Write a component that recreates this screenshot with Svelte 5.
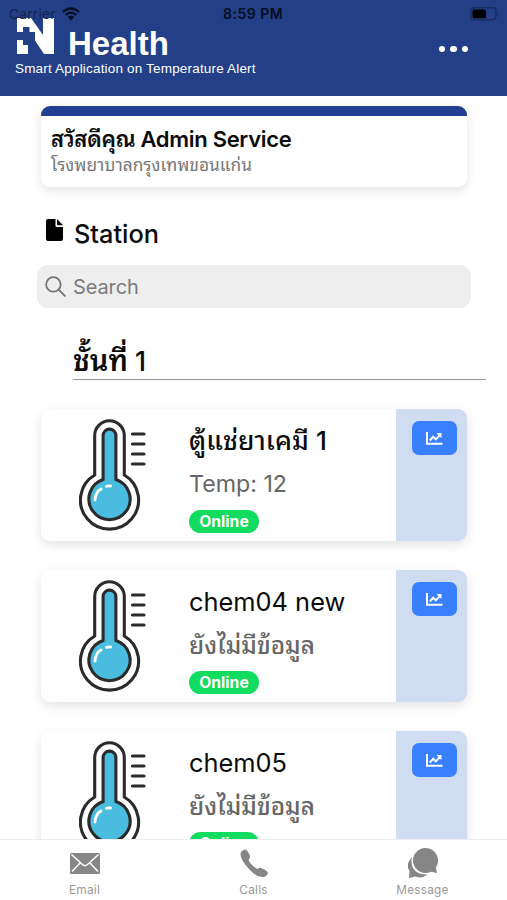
<script>
  const stations = [
    { name: 'ตู้แช่ยาเคมี 1', thai: true, detail: 'Temp: 12', status: 'Online' },
    { name: 'chem04 new', detail: 'ยังไม่มีข้อมูล', thaiDetail: true, status: 'Online' },
    { name: 'chem05', detail: 'ยังไม่มีข้อมูล', thaiDetail: true, status: 'Online' }
  ];

  let search = $state('');
</script>

<div class="app">
  <header class="header">
    <div class="statusbar">
      <span class="carrier">Carrier</span>
      <svg class="wifi" viewBox="0 0 18 14">
        <path d="M1 5Q9-2 17 5M3.8 8Q9 3.4 14.2 8" fill="none" stroke="#050d20" stroke-width="2.2" />
        <path d="M5.8 10Q9 7.4 12.2 10L9 13.6z" fill="#050d20" />
      </svg>
      <span class="time">8:59 PM</span>
      <svg class="battery" viewBox="0 0 30 14">
        <rect x=".8" y=".8" width="25" height="12" rx="3" fill="none" stroke="#182d61" stroke-width="1.4" />
        <rect x="2.5" y="2.5" width="13.5" height="8.8" rx="1.5" fill="#000" />
        <path d="M27 4.5Q29.5 6.8 27 9z" fill="#182d61" />
      </svg>
    </div>
    <div class="brand">
      <svg class="logo" viewBox="0 0 38 37">
        <path d="M0 0H14L26 17V0H37V36H27L18 22.5V14H12.5V9H6V14H0z" fill="#fff" />
        <path d="M0 22H6V27H11V36H0z" fill="#fff" />
      </svg>
      <h1>Health</h1>
      <button class="more" aria-label="Menu"><i></i><i></i><i></i></button>
    </div>
    <p class="tagline">Smart Application on Temperature Alert</p>
  </header>

  <main class="content">
    <section class="greeting">
      <h2>สวัสดีคุณ Admin Service</h2>
      <p>โรงพยาบาลกรุงเทพขอนแก่น</p>
    </section>

    <div class="title">
      <svg class="file" viewBox="0 0 17 22">
        <path d="M2 0H9.5V6.5Q9.5 8 11 8H17V20Q17 22 15 22H2Q0 22 0 20V2Q0 0 2 0z" />
        <path d="M11 0L17 6.3H12Q11 6.3 11 5.3z" />
      </svg>
      <h3>Station</h3>
    </div>

    <label class="search">
      <svg viewBox="0 0 22 22" fill="none" stroke="#747474" stroke-width="1.9" stroke-linecap="round">
        <circle cx="8.8" cy="8.8" r="7.6" />
        <path d="M14.3 14.3L20.8 20.8" />
      </svg>
      <input type="text" placeholder="Search" bind:value={search} />
    </label>

    <h3 class="floor"><span>ชั้นที่</span> 1</h3>

    {#each stations as station}
      <article class="card">
        <svg class="thermo" viewBox="0 0 70 112">
          <path d="M15.7 56V16.5a14.800 14.800 0 0 1 29.600 0V56A29.100 29.100 0 1 1 15.7 56z" fill="#fff" stroke="#2b2b2b" stroke-width="3.1" />
          <path d="M24.1 60.5V16.5a6.400 6.400 0 0 1 12.800 0V60.5A20.600 20.600 0 1 1 24.1 60.5z" fill="#49bce0" stroke="#2b2b2b" stroke-width="3.1" />
          <path d="M16 81Q16.5 73 22 70M27.5 67.3Q29.5 66.7 31.5 67" fill="none" stroke="#fff" stroke-width="2.9" stroke-linecap="round" />
          <path d="M53.5 15H65M53.5 25H65M53.5 35H65M53.5 45H65" stroke="#2b2b2b" stroke-width="3.2" stroke-linecap="round" />
        </svg>
        <div class="info">
          <h4 class:thai={station.thai}>{station.name}</h4>
          <p class:thai={station.thaiDetail}>{station.detail}</p>
          <span class="badge">{station.status}</span>
        </div>
        <div class="side">
          <button class="chart" aria-label="Chart">
            <svg viewBox="0 0 17 13" fill="none" stroke="#fff" stroke-width="2">
              <path d="M1 0V11.8H16.5" />
              <path d="M3.8 8.5L7.2 4.8L9.8 7.4L13.5 3.5" />
              <path d="M10.5 1H15.5V6z" fill="#fff" stroke="none" />
            </svg>
          </button>
        </div>
      </article>
    {/each}
  </main>

  <nav class="tabs">
    <a href="#email">
      <svg viewBox="0 0 30 30" fill="#868686">
        <rect x="0" y="5" width="30" height="21" rx="1.5" />
        <path d="M1.5 6.5L12.5 16.5Q15 18.8 17.5 16.5L28.5 6.5M2 23.5L10 15M28 23.5L20 15" fill="none" stroke="#fff" stroke-width="1.5" />
      </svg>
      <span>Email</span>
    </a>
    <a href="#calls">
      <svg viewBox="0 0 30 30" fill="#868686">
        <path d="M1.5 5Q3.5 1.5 6.5 1.5Q9 2.500 11 8Q11.5 10 9.500 12Q11.5 17 18.500 21Q21 19 22 20Q28.5 22.500 29 25Q28 28.500 24.500 29Q18 30 10 21Q1 11 1.5 5z" />
      </svg>
      <span>Calls</span>
    </a>
    <a href="#message">
      <svg viewBox="0 0 30 30" fill="#868686">
        <path d="M4 9Q-3 16.500 1.5 23L1 30L7.500 28.500Q14 31 19.500 26.500Q9 27 5 20Q2.5 15 4 9z" />
        <path d="M17.500 0a12.500 12.500 0 1 0 5.500 23.700L29 25L27.800 19.500A12.500 12.500 0 0 0 17.500 0z" />
      </svg>
      <span>Message</span>
    </a>
  </nav>
</div>

<style>
  :global(body) {
    margin: 0;
    background: #fff;
  }

  .app {
    display: flex;
    flex-direction: column;
    height: 900px;
    overflow: hidden;
    background: #fff;
    color: #0c0c0c;
    font-family: Inter, 'Noto Sans Thai Looped', 'Noto Sans Thai', sans-serif;
  }

  h1, h2, h3, h4, p {
    margin: 0;
  }

  button {
    border: 0;
    padding: 0;
  }

  .header {
    height: 96px;
    flex: none;
    background: #223f87;
    color: #fff;
    font-family: 'Liberation Sans', sans-serif;
  }

  .statusbar {
    position: relative;
    z-index: 1;
    display: flex;
    align-items: center;
    height: 18px;
    padding: 5px 7px 0 9px;
    color: #050d20;
    font: 13px/18px Inter, sans-serif;
    white-space: nowrap;
  }

  .carrier {
    width: 47px;
    color: #14244c;
    font-size: 13.6px;
    letter-spacing: 0.3px;
  }

  .wifi {
    width: 18px;
    height: 14px;
    margin-left: 6px;
  }

  .time {
    margin-left: 143px;
    font-size: 14px;
    font-weight: 600;
    letter-spacing: 0.5px;
  }

  .battery {
    width: 30px;
    height: 14px;
    margin-left: auto;
  }

  .brand {
    display: flex;
    height: 37px;
    margin-top: -5px;
    padding: 0 39px 0 17px;
  }

  .logo {
    width: 38px;
    height: 37px;
  }

  h1 {
    margin: 6px 0 0 13px;
    font-size: 33px;
    line-height: 40px;
  }

  .more {
    display: flex;
    gap: 5px;
    align-items: flex-start;
    margin-left: auto;
    padding-top: 28px;
    background: none;
  }

  .more i {
    width: 6.4px;
    height: 6.4px;
    border-radius: 50%;
    background: #fff;
  }

  .tagline {
    margin: 6px 0 0 15px;
    font-size: 13.5px;
    line-height: 16px;
    letter-spacing: 0.18px;
  }

  .content {
    flex: 1;
    min-height: 0;
    overflow: hidden;
    padding: 10px 36px 0 41px;
  }

  .greeting {
    box-sizing: border-box;
    height: 81px;
    width: 426px;
    border-top: 10px solid #223f91;
    border-radius: 9px;
    padding: 10px 10px 0;
    box-shadow: 0 4px 11px rgba(0, 0, 0, 0.11);
  }

  h2 {
    font-size: 22px;
    line-height: 26px;
    font-weight: 600;
    letter-spacing: -0.3px;
    white-space: nowrap;
  }

  .greeting p {
    font-size: 17.3px;
    line-height: 24px;
    padding-top: 1px;
    color: #777;
  }

  .title {
    display: flex;
    align-items: flex-start;
    gap: 11px;
    margin-top: 32px;
    padding-left: 5px;
  }

  .file {
    width: 17px;
    height: 22px;
  }

  h3 {
    font-size: 25.3px;
    line-height: 30px;
    font-weight: 500;
  }

  .search {
    display: flex;
    align-items: center;
    gap: 7px;
    box-sizing: border-box;
    width: 434px;
    height: 43px;
    margin: 16px 0 0 -4px;
    padding-left: 8px;
    border-radius: 11px;
    background: #eee;
  }

  .search svg {
    width: 21px;
    height: 21px;
  }

  .search input {
    flex: 1;
    border: 0;
    padding: 0;
    outline: 0;
    background: none;
    font: 20px Inter, sans-serif;
    letter-spacing: -0.1px;
  }

  .search input::placeholder {
    color: #7b7b7b;
  }

  .floor {
    height: 47px;
    margin: 24px -15px 29px 32px;
    border-bottom: 1px solid #999;
    font-size: 26.5px;
    line-height: 57px;
    white-space: nowrap;
  }

  .floor span {
    font-size: 29px;
    font-weight: 600;
  }

  .card {
    display: flex;
    width: 426px;
    height: 132px;
    margin-bottom: 29px;
    border-radius: 9px;
    overflow: hidden;
    box-shadow: 0 4px 11px rgba(0, 0, 0, 0.11);
  }

  .thermo {
    width: 70px;
    height: 112px;
    margin: 10px 0 0 38px;
  }

  .info {
    flex: 1;
    padding: 12px 0 0 40px;
    white-space: nowrap;
  }

  h4 {
    height: 40px;
    font-size: 25.4px;
    line-height: 40px;
    font-weight: 400;
  }

  h4.thai {
    font-size: 26.3px;
    line-height: 39px;
    font-weight: 500;
    letter-spacing: 0.1px;
  }

  .info p {
    height: 40px;
    font-size: 23.2px;
    line-height: 46px;
    color: #666;
  }

  .info p.thai {
    font-size: 24.3px;
    font-weight: 500;
  }

  .badge {
    display: block;
    width: 70px;
    height: 23px;
    margin-top: 9px;
    border-radius: 12px;
    background: #10dc60;
    color: #fff;
    font-size: 15.7px;
    line-height: 24px;
    font-weight: 700;
    text-align: center;
  }

  .side {
    display: flex;
    justify-content: center;
    width: 71px;
    background: #cfdcf2;
  }

  .chart {
    width: 45px;
    height: 34px;
    margin: 12px 0 0 6px;
    border-radius: 7px;
    background: #3880ff;
  }

  .chart svg {
    width: 17px;
    height: 13px;
    vertical-align: -2px;
  }

  .tabs {
    display: flex;
    flex: none;
    height: 60px;
    border-top: 1px solid #eee;
    background: #fff;
  }

  .tabs a {
    display: flex;
    flex: 1;
    flex-direction: column;
    align-items: center;
    padding-top: 8px;
    color: #999;
    font-size: 11.8px;
    line-height: 16px;
    letter-spacing: 0.25px;
    text-decoration: none;
  }

  .tabs svg {
    width: 30px;
    height: 30px;
    margin-bottom: 4px;
  }
</style>
